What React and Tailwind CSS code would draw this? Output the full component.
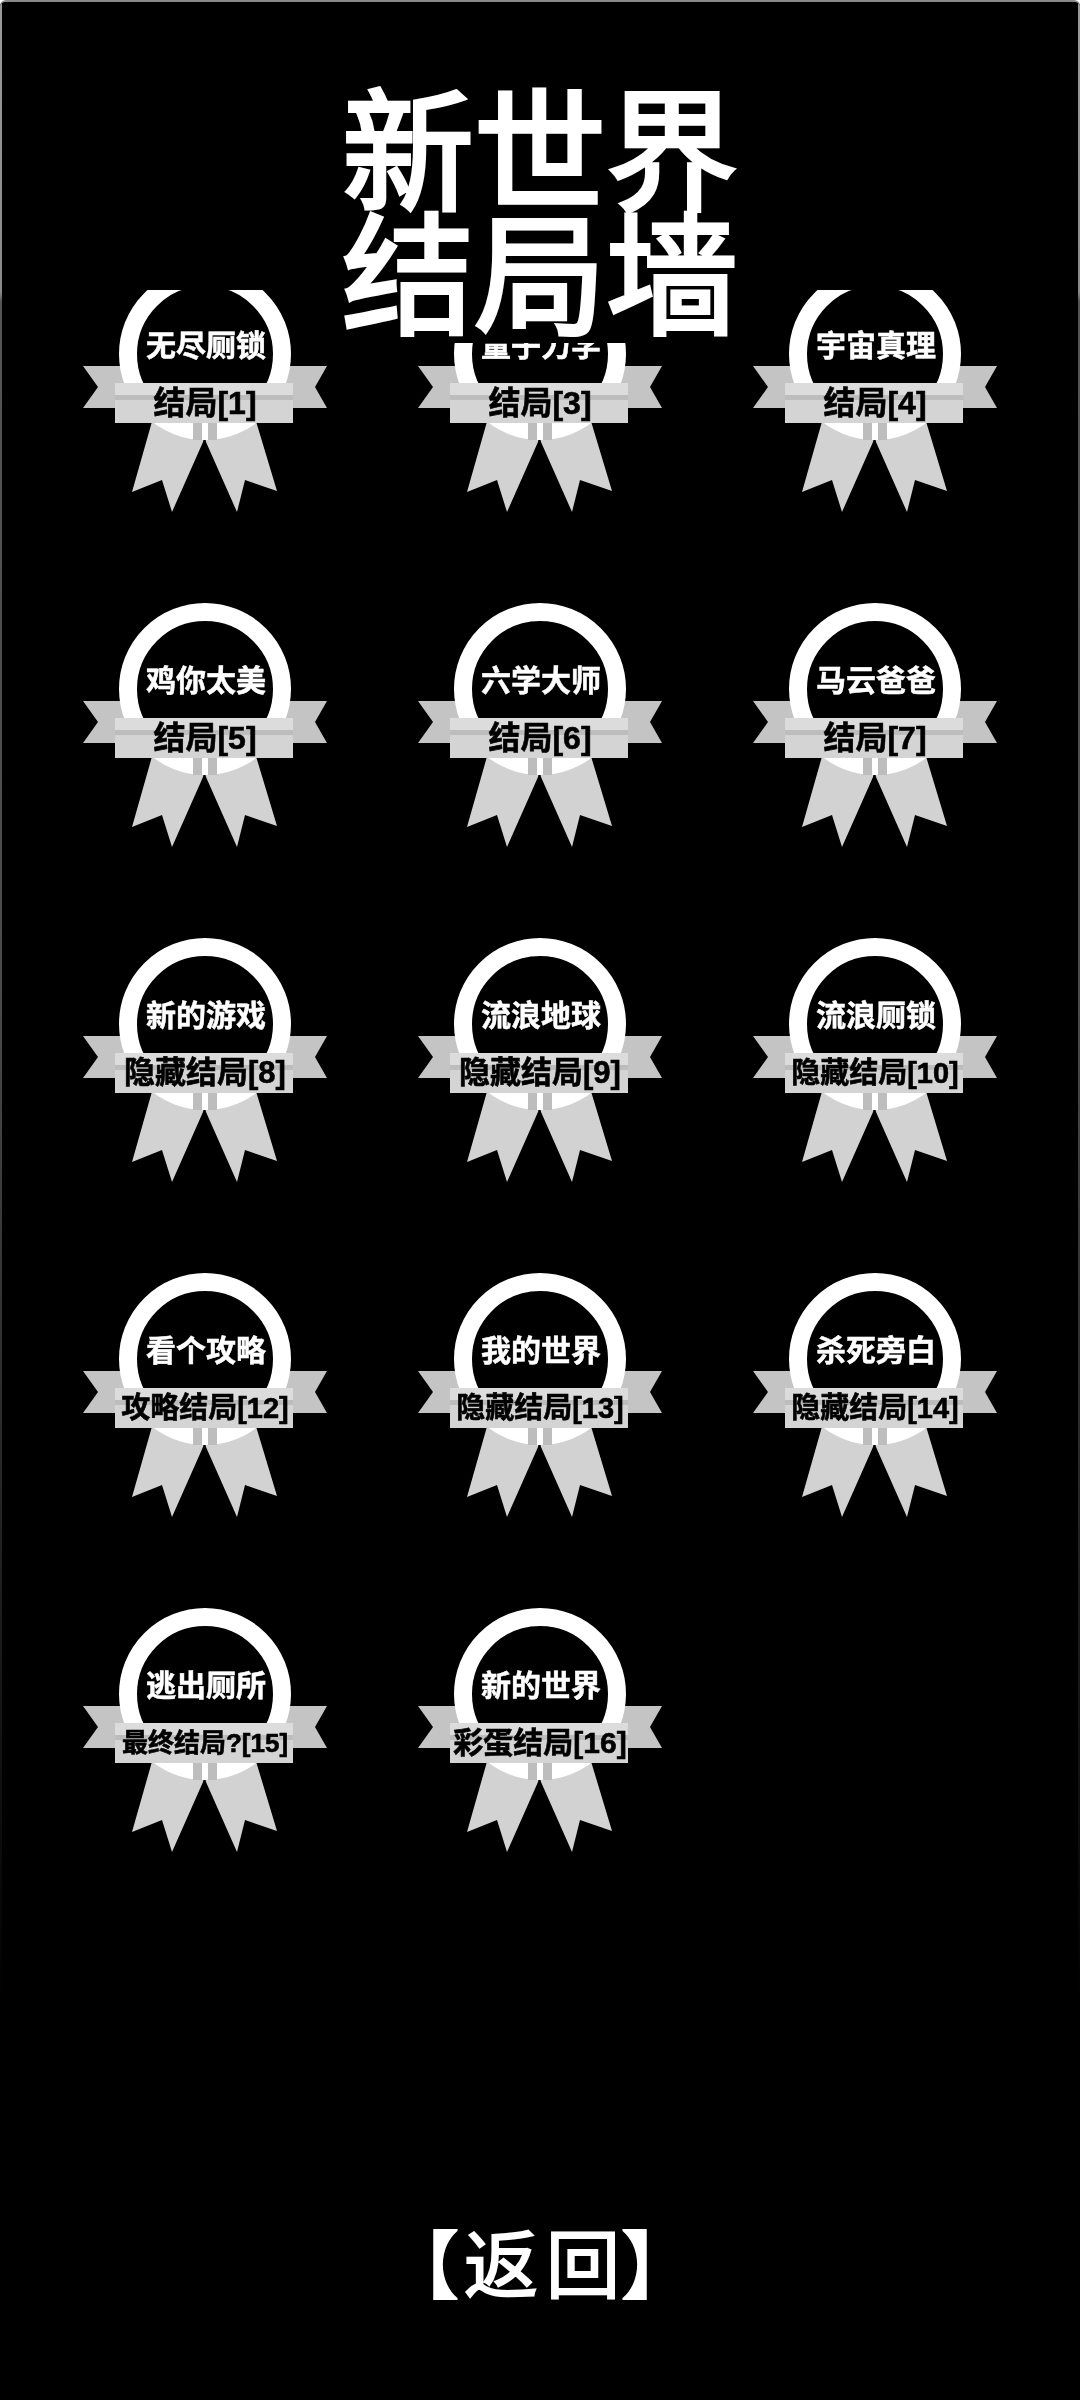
const badges = [
  { title: "无尽厕锁", label: "结局[1]", size: "text-[32px]" },
  { title: "量子力学", label: "结局[3]", size: "text-[32px]" },
  { title: "宇宙真理", label: "结局[4]", size: "text-[32px]" },
  { title: "鸡你太美", label: "结局[5]", size: "text-[32px]" },
  { title: "六学大师", label: "结局[6]", size: "text-[32px]" },
  { title: "马云爸爸", label: "结局[7]", size: "text-[32px]" },
  { title: "新的游戏", label: "隐藏结局[8]", size: "text-[31px]" },
  { title: "流浪地球", label: "隐藏结局[9]", size: "text-[31px]" },
  { title: "流浪厕锁", label: "隐藏结局[10]", size: "text-[29px]" },
  { title: "看个攻略", label: "攻略结局[12]", size: "text-[29px]" },
  { title: "我的世界", label: "隐藏结局[13]", size: "text-[29px]" },
  { title: "杀死旁白", label: "隐藏结局[14]", size: "text-[29px]" },
  { title: "逃出厕所", label: "最终结局?[15]", size: "text-[26px]" },
  { title: "新的世界", label: "彩蛋结局[16]", size: "text-[30px]" },
];

const font = "[font-family:'Liberation_Sans','Noto_Sans_CJK_SC',sans-serif]";
const edge = "absolute top-0 w-[2px] h-[2000px] z-20 bg-[linear-gradient(to_bottom,#9a9a9a_0px,#8a8a8a_290px,#555555_300px,#4a4a4a_1000px,transparent_2000px)]";

const Medal = () => (
  <svg viewBox="0 0 250 250" className="absolute inset-0 w-[250px] h-[250px] blur-[0.6px]">
    {/* ribbon ends */}
    <path d="M0 98 L52 98 L52 140 L0 140 L15 119 Z" fill="#c4c4c4" />
    <path d="M244 98 L192 98 L192 140 L244 140 L232 119 Z" fill="#c4c4c4" />
    {/* hanging tails */}
    <path d="M70 150 L49 224 L79 212 L89 244 L120 174 L125 150 Z" fill="#d2d2d2" />
    <path d="M172 150 L194 223 L162 212 L154 244 L123 174 L118 150 Z" fill="#d2d2d2" />
    {/* ring */}
    <circle cx="122" cy="86" r="77" fill="#000" stroke="#fff" strokeWidth="18" />
    {/* centre band */}
    <rect x="32" y="115" width="178" height="40" fill="#d4d4d4" />
    <rect x="32" y="115" width="178" height="12" fill="#dcdcdc" />
    <rect x="32" y="127" width="178" height="5" fill="#bdbdbd" />
    <rect x="110" y="155" width="9" height="17" fill="#bdbdbd" />
    <rect x="125" y="155" width="9" height="17" fill="#bdbdbd" />
  </svg>
);

const Badge = ({ title, label, size }) => (
  <div className="relative w-[250px] h-[335px]">
    <Medal />
    <div className="absolute left-0 w-[246px] top-[58px] text-center text-white font-bold text-[30px] leading-[40px] [-webkit-text-stroke:0.5px_white] blur-[0.4px]">
      {title}
    </div>
    <div className={`absolute left-0 w-[244px] top-[115px] text-center text-black font-bold leading-[40px] [-webkit-text-stroke:0.6px_black] blur-[0.4px] ${size}`}>
      {label}
    </div>
  </div>
);

const App = () => {
  return (
    <div className={`relative w-[1080px] h-[2400px] bg-black border-t-2 border-[#8a8a8a] rounded-t-[6px] overflow-hidden flex flex-col ${font}`}>
      <div className={`${edge} left-0`} />
      <div className={`${edge} right-0`} />

      {/* title sits over the top of the list */}
      <div className="absolute top-[91px] left-[340px] w-[400px] h-[250px] bg-black z-10 flex flex-col items-center text-white text-[132px] leading-[124px] font-normal [-webkit-text-stroke:4px_white] blur-[0.4px]">
        <span>新世界</span>
        <span>结局墙</span>
      </div>

      <div className="mt-[288px] h-[1900px] overflow-hidden">
        <div className="grid grid-cols-[335px_335px_335px] -mt-[22px] pl-[83px]">
          {badges.map((b) => (
            <Badge key={b.title} {...b} />
          ))}
        </div>
      </div>

      <div className="mt-[40px] flex justify-center items-center text-white text-[74px] leading-[74px] [-webkit-text-stroke:2px_white]">
        <span className="-ml-[37px] -mr-[1px]">【</span>
        <span className="ml-[6px]">返</span>
        <span className="ml-[8px]">回</span>
        <span className="ml-[1px] -mr-[37px]">】</span>
      </div>
    </div>
  );
};

export default App;
